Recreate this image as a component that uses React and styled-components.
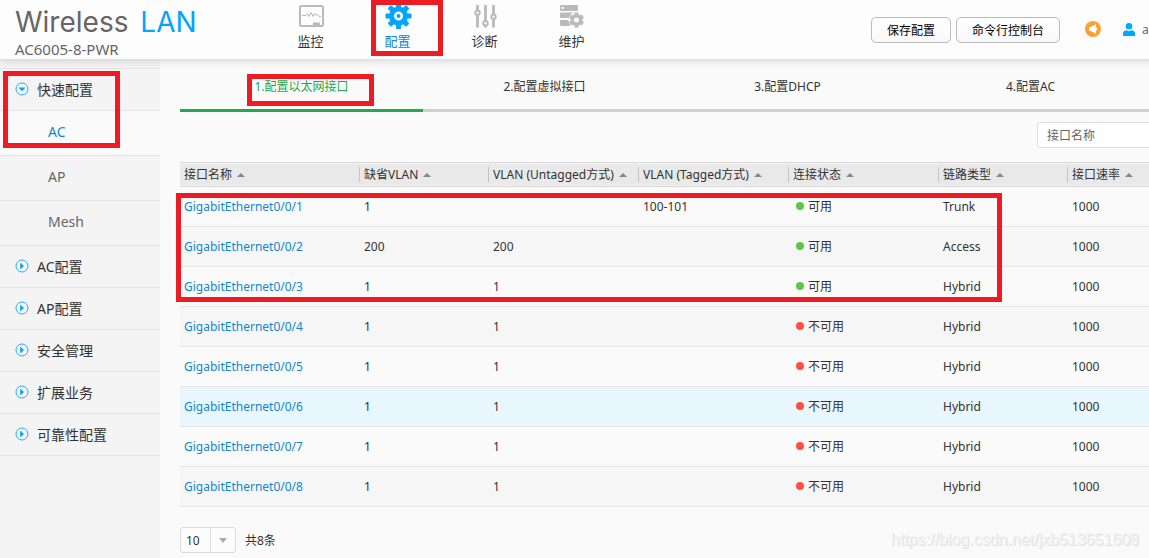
import React from 'react'
import styled, { createGlobalStyle } from 'styled-components'

const GlobalStyle = createGlobalStyle`
	* {
		box-sizing: border-box;
	}
	html,
	body {
		margin: 0;
		background: #fafafa;
	}
	body,
	button,
	input,
	select {
		font-family: 'Noto Sans', 'Noto Sans CJK SC', sans-serif;
		font-size: 12px;
		color: #333;
	}
	a {
		color: inherit;
		text-decoration: none;
	}
`

const Viewport = styled.div`
	position: relative;
	min-height: 100vh;
	overflow: hidden;
`

const Page = styled.div`
	display: flex;
	flex-direction: column;
	min-width: 1172px;
	min-height: 100vh;
`

const Header = styled.header`
	position: relative;
	z-index: 1;
	display: flex;
	height: 59px;
	background: #fdfdfd;
	box-shadow: 0 2px 8px rgba(0, 0, 0, 0.15);
`

const Brand = styled.div`
	width: 267px;
	padding: 4px 0 0 15px;
	color: #666;
`

const Title = styled.h1`
	margin: 0;
	font-family: Inter, sans-serif;
	font-size: 28px;
	line-height: 36px;
	font-weight: 400;
	white-space: nowrap;
`

const TitleAccent = styled.span`
	margin-left: 4px;
	color: #00a6ff;
`

const Model = styled.div`
	font-size: 15px;
	line-height: 18px;
`

const Nav = styled.nav`
	display: flex;
`

const NavItem = styled.a`
	position: relative;
	display: flex;
	flex-direction: column;
	align-items: center;
	width: 87px;
	padding-top: 3px;
	font-size: 13px;
	line-height: 20px;
	color: ${({ $active }) => ($active ? '#0f88d0' : '#333')};

	svg {
		width: 28px;
		height: 26px;
		margin-bottom: 2px;
	}
`

const Actions = styled.div`
	display: flex;
	align-items: flex-start;
	margin-left: auto;
	padding-top: 17px;
`

const HeaderButton = styled.button`
	height: 26px;
	margin-right: 5px;
	padding: 0 15px;
	border: 1px solid #bbb;
	border-radius: 5px;
	background: linear-gradient(#fff, #f8f8f8);
	color: #000;
`

const NoticeButton = styled.button`
	width: 16px;
	height: 16px;
	margin: 4px 22px 0 20px;
	padding: 0;
	border: 0;
	background: none;

	svg {
		display: block;
	}
`

const Account = styled.a`
	display: flex;
	align-items: center;
	gap: 7px;
	width: 49px;
	height: 24px;
	color: #666;

	svg {
		flex: none;
	}
`

const Body = styled.div`
	display: flex;
	flex: 1;
`

const Sidebar = styled.aside`
	flex: none;
	width: 160px;
	background: #f4f4f4;
`

const Menu = styled.ul`
	position: relative;
	margin: 9px 0 0;
	padding: 0;
	border-top: 1px solid #e3e3e3;
	list-style: none;
`

const MenuLink = styled.a`
	display: flex;
	align-items: center;
	gap: 8px;
	height: 42px;
	padding: 0 0 2px 15px;
	border-bottom: 1px solid #e3e3e3;
	font-size: 14px;
`

const SubLink = styled.a`
	display: flex;
	align-items: center;
	height: 45px;
	padding: 0 0 4px 48px;
	border-bottom: 1px solid #e3e3e3;
	background: ${({ $active }) => ($active ? '#fafafa' : '#f4f4f4')};
	color: ${({ $active }) => ($active ? '#0f88d0' : '#666')};
	font-size: 14px;
`

const Main = styled.main`
	flex: 1;
	min-width: 0;
	padding: 0 20px;
`

const Tabs = styled.nav`
	display: flex;
	height: 53px;
`

const Tab = styled.a`
	position: relative;
	flex: 1;
	padding-top: 18px;
	border-bottom: 3px solid ${({ $active }) => ($active ? '#22a94f' : '#d0d0d0')};
	color: ${({ $active }) => ($active ? '#22a94f' : '#333')};
	line-height: 20px;
	text-align: center;
`

const Toolbar = styled.div`
	display: flex;
	justify-content: flex-end;
	padding: 10px 0 14px;
`

const SearchInput = styled.input`
	width: 115px;
	height: 26px;
	padding: 0 9px;
	border: 1px solid #ddd;
	border-radius: 3px;
	background: #fff;

	&::placeholder {
		color: #666;
		opacity: 1;
	}
`

const TableWrap = styled.div`
	position: relative;
`

const Table = styled.table`
	width: 100%;
	table-layout: fixed;
	border-collapse: separate;
	border-spacing: 0;
`

const Th = styled.th`
	width: ${({ $width }) => $width};
	height: 25px;
	padding: 0;
	border-top: 1px solid #d9d9d9;
	border-bottom: 1px solid #d9d9d9;
	background: #e9e9e9;
	box-shadow: inset 0 1px #f3f3f3, inset 0 -1px #f3f3f3;
	font-weight: 400;
	line-height: 15px;
	text-align: left;
	white-space: nowrap;
`

const HeadCell = styled.div`
	display: flex;
	align-items: center;
	gap: 5px;
	height: 15px;
	padding-left: 4px;
	border-right: ${({ $last }) => ($last ? '0' : '1px solid #c4c4c4')};
`

const SortArrow = styled.span`
	border: 4px solid transparent;
	border-top: 0;
	border-bottom: 4px solid #888;
`

const Row = styled.tr`
	background: ${({ $hover }) => ($hover ? '#e8f6fd' : '#fafafa')};

	&:nth-child(even) {
		background: ${({ $hover }) => ($hover ? '#e8f6fd' : '#f6f6f6')};
	}
`

const Td = styled.td`
	height: 40px;
	padding: 0 4px;
	border-bottom: 1px solid #e5e5e5;
	white-space: nowrap;
`

const PortLink = styled.a`
	&& {
		color: #0f88d0;
	}
`

const Status = styled.span`
	display: flex;
	align-items: center;
	gap: 4px;
	padding: 0 0 2px 3px;

	&::before {
		content: '';
		width: 8px;
		height: 8px;
		border-radius: 50%;
		background: ${({ $up }) => ($up ? '#5cc943' : '#ff4f40')};
	}
`

const Pager = styled.div`
	display: flex;
	align-items: center;
	gap: 9px;
	padding-top: 20px;
`

const SelectBox = styled.div`
	position: relative;
	width: 56px;

	&::after {
		content: '';
		position: absolute;
		top: 11px;
		right: 9px;
		border: 4px solid transparent;
		border-top: 5px solid #aaa;
		border-bottom: 0;
		pointer-events: none;
	}
`

const PageSize = styled.select`
	display: block;
	width: 100%;
	height: 26px;
	padding: 0 5px;
	border: 1px solid #ddd;
	border-radius: 3px;
	background: linear-gradient(#ddd, #ddd) 29px 0 / 1px 100% no-repeat #fcfcfc;
	appearance: none;
`

// red frame drawn over the part that the tutorial step refers to
const Highlight = styled.span`
	position: absolute;
	top: ${({ $top }) => $top}px;
	left: ${({ $left }) => $left}px;
	z-index: 2;
	width: ${({ $width }) => $width}px;
	height: ${({ $height }) => $height}px;
	border: 5px solid #ed1c24;
	pointer-events: none;
`

const Watermark = styled.div`
	position: absolute;
	right: 10px;
	bottom: 8px;
	color: #f2f2f2;
	font-family: 'Liberation Sans', sans-serif;
	font-size: 16px;
	line-height: 20px;
	text-shadow: 1px 1px #e0e0e0;
`

const MonitorIcon = () => (
	<svg viewBox='0 0 28 26' fill='none' stroke='#bababa'>
		<rect x='3' y='3' width='23' height='20' rx='1.500' strokeWidth='2' />
		<path d='M5 12.500h4l1.500-2 1.500 3 2-4 2 4 1.500-3 1.500 2 1.500-1.500 1.500 2.500h2' strokeWidth='1' />
		<path d='M16 21h7' strokeWidth='3' />
	</svg>
)

const teeth = [0, 45, 90, 135, 180, 225, 270, 315]

const GearIcon = () => (
	<svg viewBox='0 0 28 26' fill='none'>
		<circle cx='14.500' cy='13' r='7' stroke='#00a6ff' strokeWidth='5' />
		{teeth.map((deg) => (
			<rect key={deg} x='12' y='0' width='5' height='5' rx='1' fill='#00a6ff' transform={`rotate(${deg} 14.5 13)`} />
		))}
		<circle cx='14.500' cy='13' r='2' fill='#00a6ff' />
	</svg>
)

const SlidersIcon = () => (
	<svg viewBox='0 0 28 26' fill='none' stroke='#bababa' strokeWidth='2'>
		<path d='M6.500 2v5M6.500 12.500v12M14.500 2v15.500M14.500 23v1.500M22.500 2v9M22.500 16.500v8' strokeWidth='2.800' />
		<circle cx='6.500' cy='9.700' r='2.200' />
		<circle cx='14.500' cy='20.200' r='2.200' />
		<circle cx='22.500' cy='13.700' r='2.200' />
	</svg>
)

const MaintainIcon = () => (
	<svg viewBox='0 0 28 26' fill='#bababa'>
		<rect x='2' y='2' width='18' height='6' rx='1' />
		<path d='M3 9.500h17v5.500H3a1 1 0 0 1-1-1v-3.500a1 1 0 0 1 1-1zM2 17h10v6H3a1 1 0 0 1-1-1z' />
		<circle cx='4.700' cy='5' r='1.200' fill='#fff' />
		<circle cx='18.500' cy='17' r='8' fill='#fdfdfd' />
		<circle cx='18.500' cy='17' r='4.200' fill='none' stroke='#bababa' strokeWidth='3.400' />
		{[0, 60, 120, 180, 240, 300].map((deg) => (
			<rect key={deg} x='16.500' y='9.500' width='4' height='4' rx='.5' transform={`rotate(${deg} 18.5 17)`} />
		))}
	</svg>
)

const SpeakerIcon = () => (
	<svg width='16' height='16' viewBox='0 0 16 16'>
		<circle cx='8' cy='8' r='8' fill='#ff9f30' />
		<path d='M4 6h2l5-3v10l-5-3H4z' fill='#fff' />
		<path d='M11.500 6.500v3' stroke='#fff' />
	</svg>
)

const UserIcon = () => (
	<svg width='12' height='13' viewBox='0 0 12 13' fill='#00a6ff'>
		<circle cx='6' cy='3.300' r='3.300' />
		<path d='M0 13v-2.500C0 8.500 1.500 7.500 3.500 7.200L6 8.200l2.500-1c2 .3 3.500 1.300 3.500 3.300V13z' />
	</svg>
)

const MenuIcon = ({ open }) => (
	<svg width='14' height='14' viewBox='0 0 14 14'>
		<circle cx='7' cy='7' r='6' fill='none' stroke='#29adf5' />
		<path d={open ? 'M3.500 5.500h7L7 9.200z' : 'M5.200 3.500v7L9 7z'} fill='#00a6ff' />
	</svg>
)

const navItems = [
	{ label: '监控', Icon: MonitorIcon },
	{ label: '配置', Icon: GearIcon, active: true },
	{ label: '诊断', Icon: SlidersIcon },
	{ label: '维护', Icon: MaintainIcon },
]

const subItems = ['AC', 'AP', 'Mesh']

const menuItems = ['AC配置', 'AP配置', '安全管理', '扩展业务', '可靠性配置']

const tabs = ['1.配置以太网接口', '2.配置虚拟接口', '3.配置DHCP', '4.配置AC']

const columns = [
	{ label: '接口名称', width: '180px' },
	{ label: '缺省VLAN', width: '129px' },
	{ label: 'VLAN (Untagged方式)', width: '150px' },
	{ label: 'VLAN (Tagged方式)', width: '150px' },
	{ label: '连接状态', width: '150px' },
	{ label: '链路类型', width: '129px' },
	{ label: '接口速率', width: 'auto' },
]

const ports = [
	{ vlan: '1', untagged: '', tagged: '100-101', up: true, type: 'Trunk' },
	{ vlan: '200', untagged: '200', up: true, type: 'Access' },
	{ vlan: '1', untagged: '1', up: true, type: 'Hybrid' },
	{ vlan: '1', untagged: '1', type: 'Hybrid' },
	{ vlan: '1', untagged: '1', type: 'Hybrid' },
	{ vlan: '1', untagged: '1', type: 'Hybrid', hover: true },
	{ vlan: '1', untagged: '1', type: 'Hybrid' },
	{ vlan: '1', untagged: '1', type: 'Hybrid' },
]

const App = () => {
	return (
		<>
			<GlobalStyle />
			<Viewport>
				<Page>
					<Header>
						<Brand>
							<Title>
								Wireless <TitleAccent>LAN</TitleAccent>
							</Title>
							<Model>AC6005-8-PWR</Model>
						</Brand>
						<Nav>
							{navItems.map(({ label, Icon, active }) => (
								<NavItem key={label} href='#' $active={active}>
									<Icon />
									{label}
									{active && <Highlight $top={0} $left={17} $width={72} $height={56} />}
								</NavItem>
							))}
						</Nav>
						<Actions>
							<HeaderButton type='button'>保存配置</HeaderButton>
							<HeaderButton type='button'>命令行控制台</HeaderButton>
							<NoticeButton type='button' aria-label='通知'>
								<SpeakerIcon />
							</NoticeButton>
							<Account href='#'>
								<UserIcon />
								a
							</Account>
						</Actions>
					</Header>
					<Body>
						<Sidebar>
							<Menu>
								<li>
									<MenuLink href='#'>
										<MenuIcon open />
										快速配置
									</MenuLink>
								</li>
								{subItems.map((item) => (
									<li key={item}>
										<SubLink href='#' $active={item === 'AC'}>
											{item}
										</SubLink>
									</li>
								))}
								{menuItems.map((item) => (
									<li key={item}>
										<MenuLink href='#'>
											<MenuIcon />
											{item}
										</MenuLink>
									</li>
								))}
								<Highlight as='li' $top={2} $left={3} $width={117} $height={77} />
							</Menu>
						</Sidebar>
						<Main>
							<Tabs>
								{tabs.map((tab, i) => (
									<Tab key={tab} href='#' $active={i === 0}>
										{tab}
										{i === 0 && <Highlight $top={15} $left={67} $width={127} $height={32} />}
									</Tab>
								))}
							</Tabs>
							<Toolbar>
								<SearchInput type='text' aria-label='接口名称' placeholder='接口名称' />
							</Toolbar>
							<TableWrap>
								<Table>
									<thead>
										<tr>
											{columns.map(({ label, width }, i) => (
												<Th key={label} $width={width}>
													<HeadCell $last={i === columns.length - 1}>
														{label}
														<SortArrow />
													</HeadCell>
												</Th>
											))}
										</tr>
									</thead>
									<tbody>
										{ports.map(({ vlan, untagged, tagged, up, type, hover }, i) => (
											<Row key={i} $hover={hover}>
												<Td>
													<PortLink href='#'>GigabitEthernet0/0/{i + 1}</PortLink>
												</Td>
												<Td>{vlan}</Td>
												<Td>{untagged}</Td>
												<Td>{tagged}</Td>
												<Td>
													<Status $up={up}>{up ? '可用' : '不可用'}</Status>
												</Td>
												<Td>{type}</Td>
												<Td>1000</Td>
											</Row>
										))}
									</tbody>
								</Table>
								<Highlight $top={31} $left={-4} $width={826} $height={109} />
							</TableWrap>
							<Pager>
								<SelectBox>
									<PageSize aria-label='每页条数' defaultValue='10'>
										<option>10</option>
										<option>20</option>
										<option>50</option>
									</PageSize>
								</SelectBox>
								<span>共8条</span>
							</Pager>
						</Main>
					</Body>
				</Page>
				<Watermark>https://blog.csdn.net/jxb513651608</Watermark>
			</Viewport>
		</>
	)
}

export default App
